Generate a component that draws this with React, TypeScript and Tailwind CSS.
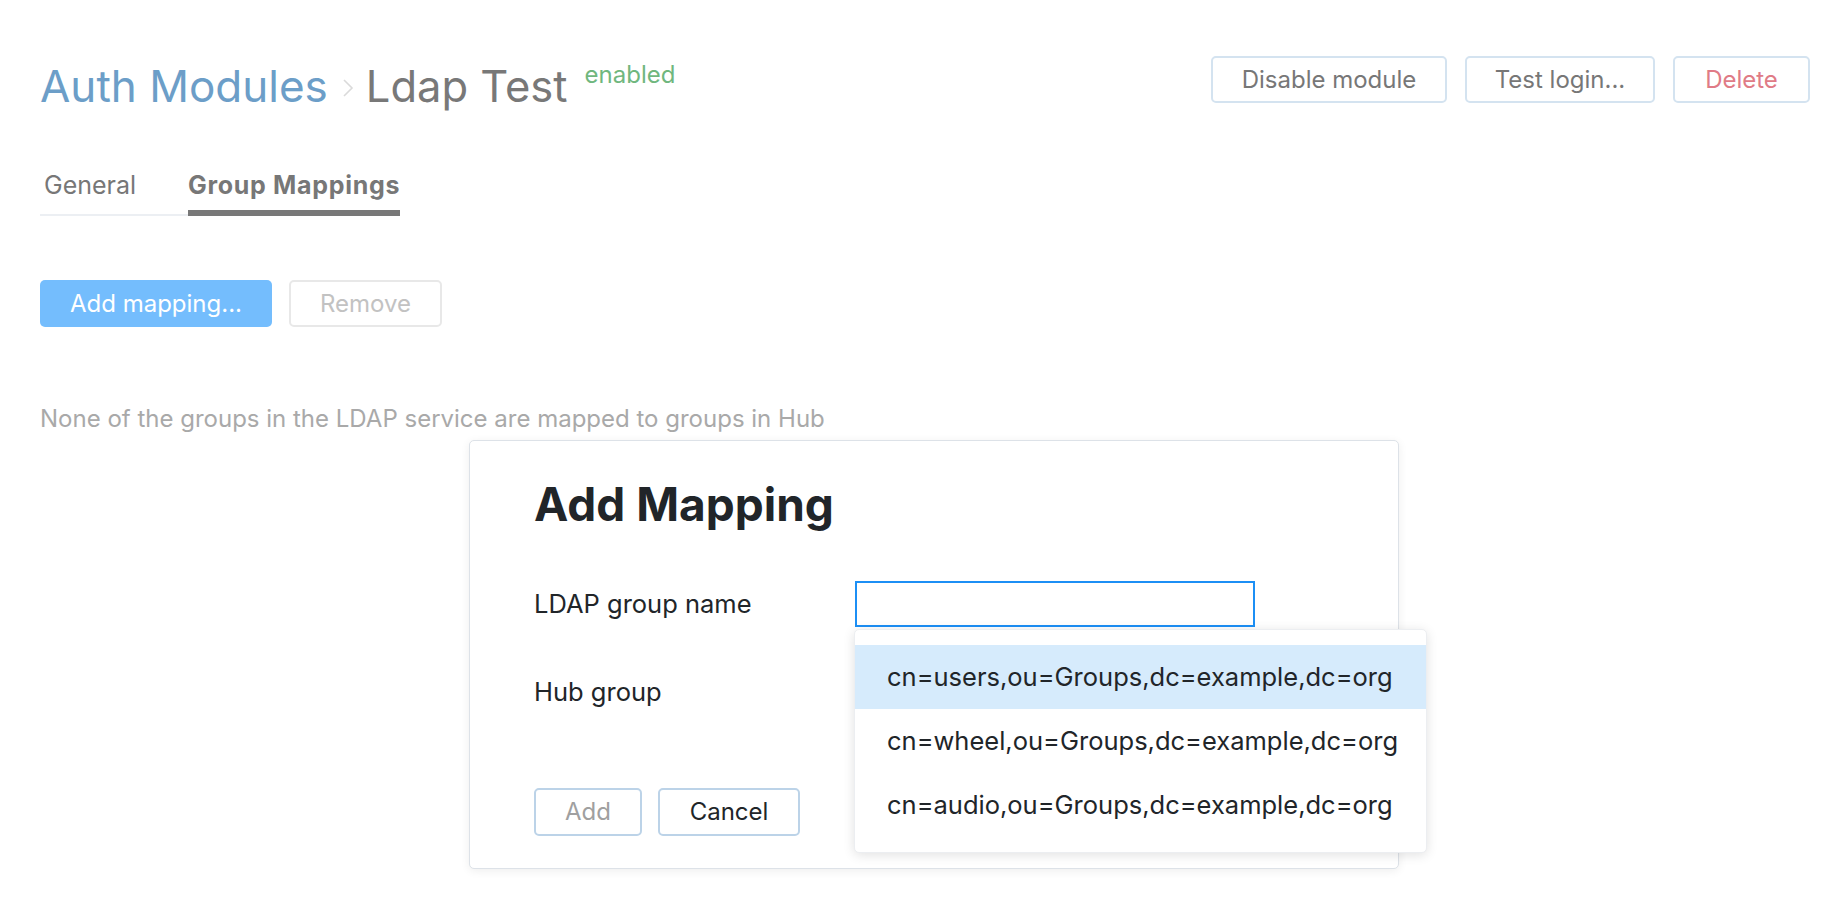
import React from 'react';

const groups = [
  'cn=users,ou=Groups,dc=example,dc=org',
  'cn=wheel,ou=Groups,dc=example,dc=org',
  'cn=audio,ou=Groups,dc=example,dc=org',
];

function Chevron() {
  return (
    <svg width="12" height="20" viewBox="0 0 12 20" className="ml-[14px] mr-[12px] mt-[22px]">
      <polyline points="2,2 10,10 2,18" fill="none" stroke="#dadada" strokeWidth="1.6" />
    </svg>
  );
}

export default function App() {
  return (
    <div className="relative min-h-[920px] w-full bg-white font-['Inter',sans-serif] text-[24px]">
      <div className="pl-[40px] pr-[36px]">
        {/* Header */}
        <div className="flex items-start justify-between pt-[56px]">
          <div className="flex items-start">
            <span className="text-[44px] leading-[61px] text-[#6c9ec8]">Auth Modules</span>
            <Chevron />
            <span className="text-[43.5px] leading-[61px] text-[#787878]">Ldap Test</span>
            <span className="ml-[17px] text-[24px] leading-[37px] text-[#70b77e]">enabled</span>
          </div>
          <div className="flex gap-[18px]">
            <button className="h-[47px] w-[236px] rounded-[5px] border-2 border-[#d4e3f0] text-[#777]">
              Disable module
            </button>
            <button className="h-[47px] w-[190px] rounded-[5px] border-2 border-[#d4e3f0] text-[#777]">
              Test login...
            </button>
            <button className="h-[47px] w-[137px] rounded-[5px] border-2 border-[#d4e3f0] text-[#e07b86]">
              Delete
            </button>
          </div>
        </div>

        {/* Tabs */}
        <div className="mt-[52px] flex items-end text-[25px] leading-[33px] text-[#777]">
          <div className="w-[148px] border-b-2 border-[#eceff3] pb-[12px] pl-[4px]">General</div>
          <div className="border-b-[6px] border-[#787878] pb-[8px] font-bold tracking-[0.7px]">Group Mappings</div>
        </div>

        {/* Actions */}
        <div className="mt-[64px] flex gap-[17px]">
          <button className="h-[47px] w-[232px] rounded-[5px] bg-[#74bdfd] text-white">Add mapping...</button>
          <button className="h-[47px] w-[153px] rounded-[5px] border-2 border-[#e8e8e8] text-[#c2c2c2]">Remove</button>
        </div>

        <p className="mt-[76px] leading-[31px] text-[#a9a9a9]">
          None of the groups in the LDAP service are mapped to groups in Hub
        </p>
      </div>

      {/* Dialog */}
      <div className="absolute left-[469px] top-[440px] h-[429px] w-[930px] rounded-[5px] border border-[#dde2e8] bg-white pl-[64px] pt-[35px] shadow-[0_2px_10px_rgba(0,0,0,0.07)]">
        <h2 className="text-[46px] font-bold leading-[56px] text-[#212529]">Add Mapping</h2>
        <div className="mt-[49px] flex items-center text-[25.5px] text-[#212529]">
          <label className="w-[321px]">LDAP group name</label>
          <div className="h-[46px] w-[400px] border-2 border-[#1c8ff5] bg-white" />
        </div>
        <div className="mt-[42px] flex h-[46px] items-center text-[25.5px] text-[#212529]">
          <label className="w-[321px]">Hub group</label>
        </div>
        <div className="mt-[73px] flex gap-[16px] text-[24px]">
          <button className="h-[48px] w-[108px] rounded-[5px] border-2 border-[#bcd3e8] text-[#a0a0a0]">Add</button>
          <button className="h-[48px] w-[142px] rounded-[5px] border-2 border-[#bcd3e8] text-[#212529]">Cancel</button>
        </div>
      </div>

      {/* Autocomplete popup */}
      <div className="absolute left-[854px] top-[629px] w-[573px] rounded-[5px] border border-[#eceef1] bg-white py-[15px] shadow-[0_2px_12px_rgba(0,0,0,0.12)]">
        {groups.map((g, i) => (
          <div
            key={g}
            className={`flex h-[64px] items-center px-[32px] text-[25.5px] text-[#212529] ${i === 0 ? 'bg-[#d6ebfc]' : ''}`}
          >
            {g}
          </div>
        ))}
      </div>
    </div>
  );
}
